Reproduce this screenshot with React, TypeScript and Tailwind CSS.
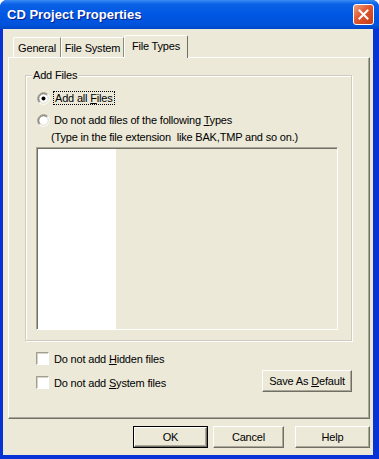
import React from "react";

function Radio({ checked }: { checked?: boolean }) {
  return (
    <svg width="13" height="13" viewBox="0 0 13 13" className="shrink-0">
      <circle cx="6.5" cy="6.5" r="5.5" fill="#fff" />
      <path d="M2.26 10.74 A6 6 0 0 1 10.74 2.26" stroke="#9D9A8C" fill="none" />
      <path d="M3.1 9.9 A4.8 4.8 0 0 1 9.9 3.1" stroke="#5E5C54" fill="none" />
      <path d="M10.74 2.26 A6 6 0 0 1 2.26 10.74" stroke="#fff" fill="none" />
      <path d="M9.9 3.1 A4.8 4.8 0 0 1 3.1 9.9" stroke="#DCD9CB" fill="none" />
      {checked && <circle cx="6.5" cy="6.5" r="2" fill="#000" />}
    </svg>
  );
}

function Check() {
  return (
    <span className="box-border block h-[13px] w-[13px] shrink-0 border border-t-[#A19E90] border-l-[#A19E90] border-b-white border-r-white bg-white shadow-[inset_1px_1px_0_#D6D3C5]" />
  );
}

function Btn({
  children,
  className = "",
  def,
}: {
  children: React.ReactNode;
  className?: string;
  def?: boolean;
}) {
  return (
    <div
      className={`box-border h-[22px] shrink-0 ${def ? "border border-black" : ""} ${className}`}
    >
      <div className="box-border flex h-full items-center justify-center border border-t-white border-l-white border-b-[#716F64] border-r-[#716F64] bg-[#ECE9D8] shadow-[inset_-1px_-1px_0_#ACA899]">
        {children}
      </div>
    </div>
  );
}

export default function App() {
  return (
    <div className="h-[459px] w-[379px] bg-white">
      <div className="flex h-full flex-col rounded-t-[7px] bg-[#0733D6] font-['Liberation_Sans',Arial,sans-serif] text-[11px] leading-[14px] tracking-[-0.18px] text-black">
        <div className="flex h-[29px] shrink-0 items-center justify-between rounded-t-[7px] bg-[linear-gradient(to_bottom,#3A8CF5_0%,#0B62E6_14%,#0057E3_50%,#0053DB_85%,#0046C8_100%)] pl-[7px] pr-[5px]">
          <span className="text-[13px] font-bold leading-[16px] tracking-normal text-white [text-shadow:1px_1px_0_#0A1E8C]">
            CD Project Properties
          </span>
          <div className="flex h-[21px] w-[21px] items-center justify-center rounded-[3px] border border-white bg-[linear-gradient(135deg,#F0A080_0%,#E0572F_45%,#C23D18_100%)]">
            <svg width="11" height="11" viewBox="0 0 11 11">
              <path d="M1.5 1.5 L9.5 9.5 M9.5 1.5 L1.5 9.5" stroke="#fff" strokeWidth="2" strokeLinecap="square" />
            </svg>
          </div>
        </div>

        <div className="mb-[4px] ml-[3px] mr-[6px] flex flex-1 flex-col bg-[#ECE9D8] pb-[7px] pl-[5px] pr-[3px] pt-[6px]">
          <div className="flex h-[22px] shrink-0 items-end pl-[5px]">
            <div className="box-border flex h-[20px] w-[48px] items-center justify-center rounded-tl-[2px] border-l border-t border-l-white border-t-white border-r border-r-[#8E8B7C]">
              General
            </div>
            <div className="box-border flex h-[20px] w-[63px] items-center justify-center border-l border-t border-l-white border-t-white border-r border-r-[#8E8B7C]">
              File System
            </div>
            <div className="relative z-10 -mb-px box-border flex h-[23px] w-[64px] items-center justify-center rounded-t-[2px] border-l border-t border-l-white border-t-white border-r border-r-[#716F64] bg-[#ECE9D8] pb-[3px]">
              File Types
            </div>
          </div>

          <div className="box-border flex flex-1 flex-col border border-t-white border-l-white border-b-[#716F64] border-r-[#716F64] pl-[16px] pr-[17px] pt-[11px] shadow-[inset_-1px_-1px_0_#ACA899]">
            <fieldset className="m-0 border border-[#D0CDBF] p-0 shadow-[inset_1px_1px_0_#fff,1px_1px_0_#fff]">
              <legend className="ml-[6px] bg-[#ECE9D8] px-[1px] leading-[13px]">Add Files</legend>
              <div className="flex flex-col pb-[10px] pl-[10px] pr-[13px]">
                <div className="ml-[1px] mt-[9px] flex h-[14px] items-center">
                  <Radio checked />
                  <span className="ml-[3px] border border-dotted border-black px-[1px] leading-[12px]">
                    Add all <span className="underline underline-offset-[1px]">F</span>iles
                  </span>
                </div>
                <div className="ml-[1px] mt-[8px] flex h-[14px] items-center">
                  <Radio />
                  <span className="ml-[4px]">
                    Do not add files of the following <span className="underline underline-offset-[1px]">T</span>ypes
                  </span>
                </div>
                <div className="ml-[15px] mt-[3px] h-[14px] whitespace-pre">
                  (Type in the file extension  like BAK,TMP and so on.)
                </div>
                <div className="mt-[3px] box-border flex h-[183px] border border-t-[#ACA899] border-l-[#ACA899] border-b-white border-r-white bg-[#ECE9D8] shadow-[inset_1px_1px_0_#716F64]">
                  <div className="ml-[1px] mt-[1px] w-[78px] bg-white" />
                </div>
              </div>
            </fieldset>

            <div className="mt-[11px] flex items-end justify-between">
              <div className="flex flex-col gap-[11px] pb-[3px] pl-[11px]">
                <div className="flex h-[13px] items-center gap-[5px]">
                  <Check />
                  <span>
                    Do not add <span className="underline underline-offset-[1px]">H</span>idden files
                  </span>
                </div>
                <div className="flex h-[13px] items-center gap-[5px]">
                  <Check />
                  <span>
                    Do not add <span className="underline underline-offset-[1px]">S</span>ystem files
                  </span>
                </div>
              </div>
              <Btn className="w-[90px]">
                <span>
                  Save As <span className="underline underline-offset-[1px]">D</span>efault
                </span>
              </Btn>
            </div>
          </div>

          <div className="mt-[7px] flex shrink-0 justify-end">
            <Btn def className="w-[75px]">OK</Btn>
            <Btn className="ml-[5px] w-[71px]">Cancel</Btn>
            <Btn className="ml-[11px] w-[75px]">Help</Btn>
          </div>
        </div>
      </div>
    </div>
  );
}
